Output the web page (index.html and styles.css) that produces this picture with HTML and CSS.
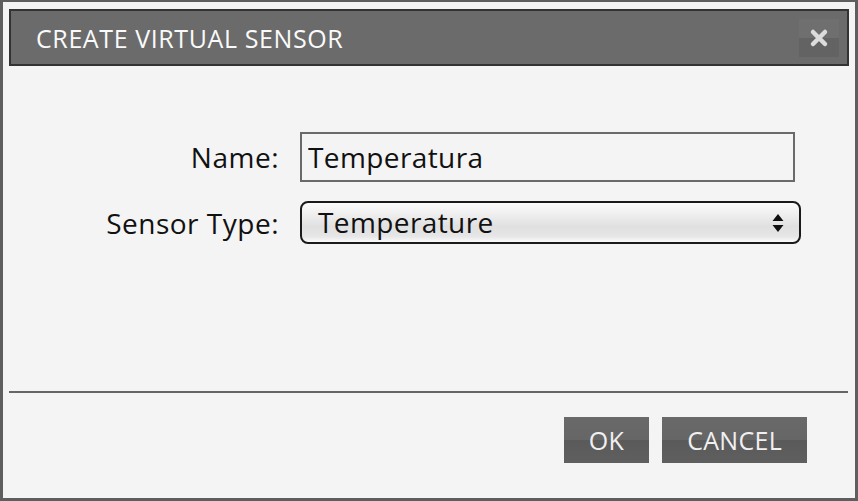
FILE: index.html
```html
<!DOCTYPE html>
<html lang="en">
<head>
    <meta charset="UTF-8">
    <title>Create Virtual Sensor</title>
    <link rel="stylesheet" href="styles.css">
</head>
<body>
    <div class="dialog">
        <div class="dialog-header">
            <span class="dialog-title">CREATE VIRTUAL SENSOR</span>
            <button class="close-btn" type="button" title="Close">
                <svg width="20" height="20" viewBox="0 0 20 20">
                    <path d="M4 4 L16 16 M16 4 L4 16" stroke="#dcdcdc" stroke-width="4.5" stroke-linecap="round"/>
                </svg>
            </button>
        </div>

        <form class="dialog-body">
            <div class="form-row">
                <label for="name">Name:</label>
                <input type="text" id="name" class="text-input" value="Temperatura">
            </div>
            <div class="form-row">
                <label for="type">Sensor Type:</label>
                <div class="select-box" id="type">
                    <span>Temperature</span>
                    <svg class="arrows" width="12" height="22" viewBox="0 0 12 22">
                        <path d="M6 2 L11.5 9 L0.5 9 Z M0.5 13 L11.5 13 L6 20 Z" fill="#111"/>
                    </svg>
                </div>
            </div>
        </form>

        <div class="separator"></div>

        <div class="dialog-footer">
            <button type="button" class="btn">OK</button>
            <button type="button" class="btn">CANCEL</button>
        </div>
    </div>
</body>
</html>
```

FILE: styles.css
```css
html, body { margin: 0; padding: 0; }
body { font-family: "Open Sans", "Noto Sans", sans-serif; background: #f4f4f4; }

.dialog { box-sizing: border-box; width: 858px; height: 501px; border: 3px solid #5e5e5e; border-top-width: 2px; background: #f4f4f4; display: flex; flex-direction: column; padding: 7px 6px 0 6px; }

.dialog-header { height: 57px; box-sizing: border-box; border: 2px solid #333; background: #6b6b6b; display: flex; align-items: center; justify-content: space-between; padding: 0 8px 0 25px; }
.dialog-title { color: #fafafa; font-size: 25px; letter-spacing: 0.6px; }
.close-btn { width: 40px; height: 38px; border: none; padding: 0; background: linear-gradient(#6f6f6f 0%, #6f6f6f 50%, #636363 50%, #636363 100%); display: flex; align-items: center; justify-content: center; cursor: pointer; }

.dialog-body { flex: 1; padding-top: 66px; display: flex; flex-direction: column; gap: 19px; }
.form-row { display: flex; align-items: center; }
.form-row label { width: 270px; text-align: right; font-size: 28px; letter-spacing: 0.5px; color: #111; margin-right: 21px; }
.text-input { box-sizing: border-box; width: 495px; height: 50px; border: 2px solid #6a6a6a; background: #f4f4f4; font-family: inherit; font-size: 28px; letter-spacing: 0.4px; color: #111; padding: 0 6px; margin: 0; outline: none; }
.select-box { box-sizing: border-box; width: 501px; height: 43px; border: 2px solid #1a1a1a; border-radius: 8px; background: linear-gradient(#fbfbfb 0%, #ececec 35%, #e0e0e0 60%, #e6e6e6 85%, #fafafa 100%); display: flex; align-items: center; justify-content: space-between; padding: 0 15px 0 16px; font-size: 28px; letter-spacing: 0.4px; color: #111; }
.select-box span { margin-top: -2px; }
.arrows { margin-top: 1px; }

.separator { height: 2px; background: #666; margin: 0 1px 0 0; }

.dialog-footer { height: 105px; box-sizing: border-box; display: flex; justify-content: flex-end; align-items: flex-start; gap: 13px; padding: 24px 42px 0 0; }
.btn { height: 46px; border: none; padding: 0 25px; min-width: 84px; font-family: inherit; font-size: 25px; letter-spacing: 0.3px; color: #f0f0f0; background: linear-gradient(#696969 0%, #666 50%, #5a5a5a 50%, #5f5f5f 100%); cursor: pointer; }
```
